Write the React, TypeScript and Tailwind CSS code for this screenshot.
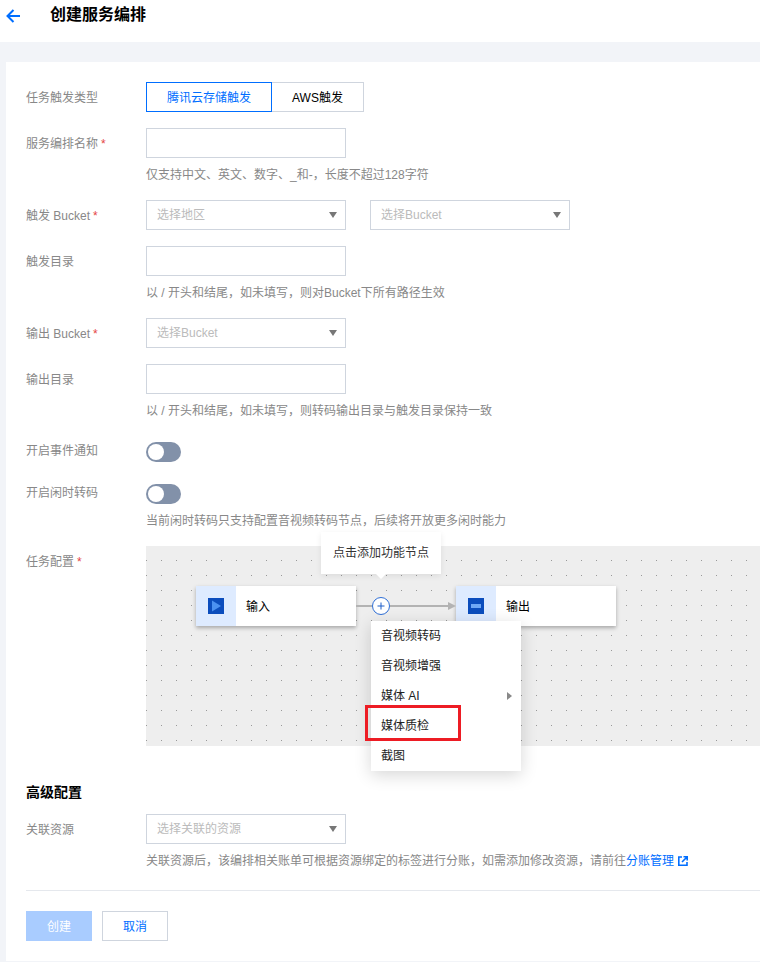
import React from 'react';

const Label: React.FC<{ text: string; required?: boolean; className?: string }> = ({ text, required, className }) => (
  <div className={`w-[120px] shrink-0 text-[#888] ${className ?? 'h-[30px] leading-[32px]'}`}>
    {text}
    {required && <span className="text-[#e54545] ml-[3px]">*</span>}
  </div>
);

const Input = () => <div className="w-[200px] h-[30px] border border-[#cfd5de] bg-white" />;

const Select: React.FC<{ placeholder: string }> = ({ placeholder }) => (
  <div className="w-[200px] h-[30px] border border-[#cfd5de] bg-white flex items-center justify-between pl-[10px] pr-[8px] text-[#bbb]">
    <span>{placeholder}</span>
    <span className="w-0 h-0 border-x-[4px] border-x-transparent border-t-[6px] border-t-[#777]" />
  </div>
);

const Hint: React.FC<{ children: React.ReactNode }> = ({ children }) => (
  <div className="ml-[120px] mt-2 leading-[18px] text-[#888]">{children}</div>
);

const Toggle = () => (
  <div className="w-[35px] h-5 rounded-full bg-[#8291a9] flex items-center pl-[2px]">
    <div className="w-4 h-4 rounded-full bg-white" />
  </div>
);

const Node: React.FC<{ text: string; className: string; icon: React.ReactNode }> = ({ text, className, icon }) => (
  <div className={`absolute top-10 w-40 h-10 bg-white flex items-center shadow-[0_2px_4px_rgba(0,0,0,0.3)] ${className}`}>
    <div className="w-10 h-10 bg-[#deebff] flex items-center justify-center">{icon}</div>
    <span className="ml-[10px] pt-px text-black">{text}</span>
  </div>
);

const menuItems = ['音视频转码', '音视频增强', '媒体 AI', '媒体质检', '截图'];

export default function App() {
  return (
    <div className="w-[760px] h-[962px] overflow-hidden bg-[#f2f4f8] text-xs font-['Liberation_Sans','Noto_Sans_CJK_SC',sans-serif]">
      <header className="h-[42px] bg-white flex items-start">
        <svg className="ml-[6px] mt-[9px] w-[14px] h-[14px]" viewBox="0 0 14 14" fill="none" stroke="#006eff" strokeWidth="2">
          <path d="M14 7H1.5M7.5 1l-6 6 6 6" />
        </svg>
        <h1 className="ml-[30px] mt-[3px] text-base font-semibold text-black">创建服务编排</h1>
      </header>

      <main className="mt-5 ml-[6px] h-[899px] bg-white pt-5 pl-5">
        <div className="flex">
          <Label text="任务触发类型" />
          <div className="flex">
            <div className="w-[126px] h-[30px] border border-[#006eff] text-[#006eff] flex items-center justify-center pt-px">腾讯云存储触发</div>
            <div className="w-[92px] h-[30px] border border-l-0 border-[#cfd5de] text-black flex items-center justify-center pt-px">AWS触发</div>
          </div>
        </div>

        <div className="flex mt-4">
          <Label text="服务编排名称" required />
          <Input />
        </div>
        <Hint>仅支持中文、英文、数字、_和-，长度不超过128字符</Hint>

        <div className="flex mt-4">
          <Label text="触发 Bucket" required />
          <Select placeholder="选择地区" />
          <div className="ml-6">
            <Select placeholder="选择Bucket" />
          </div>
        </div>

        <div className="flex mt-4">
          <Label text="触发目录" />
          <Input />
        </div>
        <Hint>以 / 开头和结尾，如未填写，则对Bucket下所有路径生效</Hint>

        <div className="flex mt-4">
          <Label text="输出 Bucket" required />
          <Select placeholder="选择Bucket" />
        </div>

        <div className="flex mt-4">
          <Label text="输出目录" />
          <Input />
        </div>
        <Hint>以 / 开头和结尾，如未填写，则转码输出目录与触发目录保持一致</Hint>

        <div className="flex mt-[22px]">
          <Label text="开启事件通知" className="h-5 leading-[19px]" />
          <Toggle />
        </div>

        <div className="flex mt-[22px]">
          <Label text="开启闲时转码" className="h-5 leading-[19px]" />
          <Toggle />
        </div>
        <Hint>当前闲时转码只支持配置音视频转码节点，后续将开放更多闲时能力</Hint>

        <div className="flex mt-4">
          <Label text="任务配置" required />
          <div className="relative w-[614px] h-[200px] bg-[#eeeeee] bg-[radial-gradient(circle_at_0.5px_0.5px,#999_0.7px,transparent_0.7px)] bg-[size:15px_15px] bg-[position:0_14px]">
            <Node
              text="输入"
              className="left-[50px]"
              icon={
                <svg width="16" height="16" viewBox="0 0 16 16">
                  <rect width="16" height="16" fill="#0b4dbd" />
                  <path d="M4 2.5 13 8l-9 5.5z" fill="#4b91f1" />
                </svg>
              }
            />
            <Node
              text="输出"
              className="left-[310px]"
              icon={
                <svg width="16" height="16" viewBox="0 0 16 16">
                  <rect width="16" height="16" fill="#0b4dbd" />
                  <rect x="3" y="6" width="10" height="4" fill="#6fa8f5" />
                </svg>
              }
            />

            <div className="absolute left-[210px] top-[59px] w-[16px] h-[2px] bg-[#b3b3b3]" />
            <div className="absolute left-[244px] top-[59px] w-[60px] h-[2px] bg-[#b3b3b3]" />
            <div className="absolute left-[302px] top-[56px] w-0 h-0 border-y-[4px] border-y-transparent border-l-[8px] border-l-[#b3b3b3]" />
            <div className="absolute left-[226px] top-[51px] w-[18px] h-[18px] rounded-full border border-[#2f6fd6] bg-white flex items-center justify-center">
              <svg width="8" height="8" viewBox="0 0 8 8" stroke="#1f5fc8" strokeWidth="1">
                <path d="M4 .5v7M.5 4h7" />
              </svg>
            </div>

            <div className="absolute left-[175px] -top-[14px] w-[120px] h-[42px] bg-white flex items-center justify-center text-[#333] shadow-[0_2px_6px_rgba(0,0,0,0.08)]">
              点击添加功能节点
              <span className="absolute left-[55px] top-[42px] w-0 h-0 border-x-[5px] border-x-transparent border-t-[5px] border-t-white" />
            </div>

            <div className="absolute left-[225px] top-[75px] w-[150px] bg-white shadow-[0_4px_16px_rgba(0,0,0,0.16)] z-10">
              {menuItems.map(item => (
                <div key={item} className="h-[30px] pl-[10px] pr-[9px] flex items-center justify-between text-[#222]">
                  <span>{item}</span>
                  {item === '媒体 AI' && (
                    <span className="w-0 h-0 border-y-[4px] border-y-transparent border-l-[5px] border-l-[#888]" />
                  )}
                </div>
              ))}
            </div>
            <div className="absolute left-[219px] top-[159px] w-[96px] h-[36px] border-[3px] border-[#ed1c24] z-20" />
          </div>
        </div>

        <h2 className="mt-[37px] text-sm leading-[18px] font-semibold text-black">高级配置</h2>

        <div className="flex mt-[13px]">
          <Label text="关联资源" />
          <Select placeholder="选择关联的资源" />
        </div>
        <div className="ml-[120px] mt-2 leading-[18px] text-[#888] flex items-center">
          关联资源后，该编排相关账单可根据资源绑定的标签进行分账，如需添加修改资源，请前往
          <span className="text-[#006eff]">分账管理</span>
          <svg className="ml-[4px]" width="10" height="10" viewBox="0 0 10 10" fill="none" stroke="#006eff" strokeWidth="1.6">
            <path d="M4 1H.8v8.2H9V6M5.5.8h3.7v3.7M9 1 4 6" />
          </svg>
        </div>

        <div className="mt-5 h-px bg-[#e5e8ed]" />

        <div className="flex mt-5 gap-[10px]">
          <div className="w-[66px] h-[30px] bg-[#a9ccff] text-white flex items-center justify-center pt-px">创建</div>
          <div className="w-[66px] h-[30px] border border-[#cfd5de] text-[#006eff] flex items-center justify-center pt-px">取消</div>
        </div>
      </main>
    </div>
  );
}
